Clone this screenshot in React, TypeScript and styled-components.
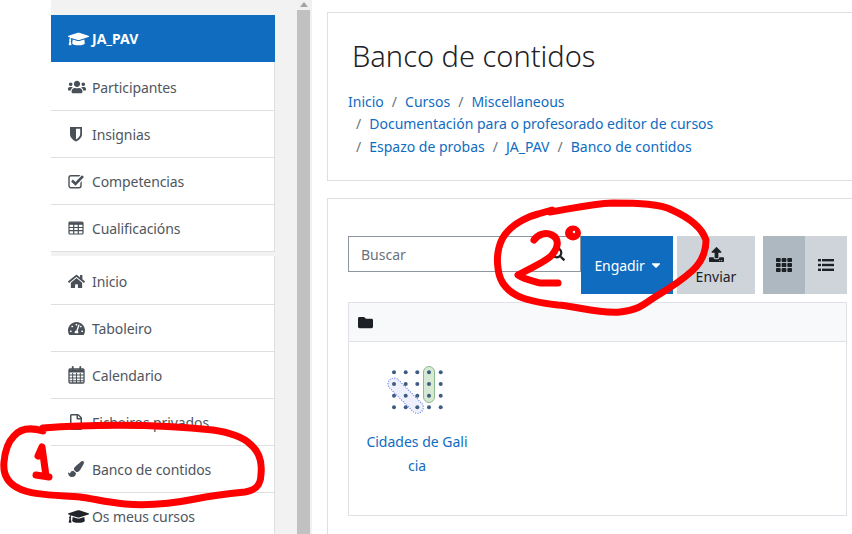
import React from 'react';
import styled, { createGlobalStyle } from 'styled-components';
import {
  FaCaretDown,
  FaFolder,
  FaGraduationCap,
  FaHome,
  FaPaintBrush,
  FaRegFile,
  FaSearch,
  FaTachometerAlt,
  FaTh,
  FaUpload,
  FaUsers,
} from 'react-icons/fa';

const GlobalStyle = createGlobalStyle`
  html, body {
    margin: 0;
    padding: 0;
    background: #fff;
    font-family: "Noto Sans", "Open Sans", sans-serif;
  }
`;

const Page = styled.div`
  position: relative;
  display: flex;
  width: 852px;
  height: 534px;
  overflow: hidden;
  background: #fff;
`;

const Gutter = styled.div`
  flex: 0 0 51px;
`;

const SideColumn = styled.aside`
  flex: 0 0 246px;
  padding-top: 15px;
  background: #f2f2f2;
`;

const SideCard = styled.nav<{ $inset?: boolean }>`
  width: 224px;
  margin-bottom: 3.6px;
  padding-top: ${props => (props.$inset ? '2px' : '0')};
  background: #fff;
  border-right: 1px solid #dfdfdf;
  box-sizing: border-box;
`;

const CourseHeader = styled.div`
  display: flex;
  align-items: center;
  gap: 3px;
  height: 47px;
  padding-left: 17px;
  margin: 0 -1px 2px 0;
  background: #0f6cbf;
  color: #fff;
  font-size: 14px;
  font-weight: 700;
  svg {
    width: 21px;
    height: 20px;
  }
`;

const SideItem = styled.div`
  display: flex;
  align-items: center;
  height: 47.1px;
  box-sizing: border-box;
  padding-left: 17px;
  border-bottom: 1px solid #dfdfdf;
  color: #4f565d;
  font-size: 14px;
  letter-spacing: -0.1px;
`;

const SideIcon = styled.span`
  display: flex;
  align-items: center;
  flex: 0 0 24px;
  color: #495057;
`;

const ScrollTrack = styled.div`
  flex: 0 0 15px;
  display: flex;
  flex-direction: column;
  align-items: center;
  box-sizing: border-box;
  padding-right: 2px;
  background: #f1f1f1;
`;

const ScrollArrow = styled.div`
  width: 0;
  height: 0;
  margin: 2px 0 3px;
  border-left: 4px solid transparent;
  border-right: 4px solid transparent;
  border-bottom: 5px solid #a3a3a3;
`;

const ScrollThumb = styled.div`
  flex: 1;
  width: 13px;
  background: #c1c1c1;
`;

const Main = styled.main`
  flex: 1;
  min-width: 0;
  padding: 12px 0 0 15px;
`;

const Card = styled.section`
  margin-right: -20px;
  border: 1px solid #dfdfdf;
  background: #fff;
`;

const HeaderCard = styled(Card)`
  height: 169px;
  box-sizing: border-box;
  padding: 20px 0 0 20px;
  margin-bottom: 17px;
`;

const Title = styled.h1`
  margin: 0 0 12px 4px;
  color: #1d2125;
  font-size: 29px;
  font-weight: 300;
  line-height: 46px;
`;

const Crumbs = styled.ol`
  display: flex;
  flex-wrap: wrap;
  width: 400px;
  margin: 0;
  padding: 0;
  list-style: none;
  font-size: 14px;
  line-height: 22.4px;
`;

const Crumb = styled.li`
  color: #0f6cbf;
  & + &::before {
    content: '/';
    padding: 0 8px;
    color: #6a737b;
  }
`;

const ContentCard = styled(Card)`
  height: 400px;
  box-sizing: border-box;
  padding: 37px 0 0 20px;
`;

const Toolbar = styled.div`
  display: flex;
  align-items: flex-start;
  height: 66px;
`;

const Search = styled.div`
  display: flex;
  align-items: center;
  justify-content: space-between;
  width: 233px;
  height: 36px;
  box-sizing: border-box;
  padding: 0 15px 0 12px;
  border: 1px solid #8f959e;
  color: #6a737b;
  font-size: 14px;
  svg {
    color: #1d2125;
    font-size: 14px;
  }
`;

const AddButton = styled.div`
  display: flex;
  align-items: center;
  justify-content: center;
  gap: 4px;
  width: 92px;
  height: 58px;
  box-sizing: border-box;
  padding-left: 3px;
  margin-right: 4px;
  background: #0f6cbf;
  color: #fff;
  font-size: 14px;
  letter-spacing: -0.1px;
  svg {
    font-size: 14px;
  }
`;

const UploadButton = styled.div`
  display: flex;
  flex-direction: column;
  align-items: center;
  width: 78px;
  height: 58px;
  box-sizing: border-box;
  padding-top: 11px;
  margin-right: 8px;
  background: #ced4da;
  color: #1d2125;
  font-size: 14px;
  line-height: 20px;
  svg {
    font-size: 15px;
    margin-bottom: 5px;
  }
`;

const ViewToggle = styled.div<{ $active?: boolean }>`
  display: flex;
  align-items: center;
  justify-content: center;
  width: 42px;
  height: 58px;
  background: ${props => (props.$active ? '#aeb8c1' : '#ced4da')};
  color: #1d2125;
  font-size: 16px;
`;

const FilePanel = styled.div`
  width: 499px;
  height: 214px;
  box-sizing: border-box;
  border: 1px solid #dee2e6;
`;

const PathBar = styled.div`
  display: flex;
  align-items: center;
  height: 39px;
  box-sizing: border-box;
  padding-left: 9px;
  background: #f8f9fa;
  border-bottom: 1px solid #dee2e6;
  color: #1d2125;
  font-size: 15px;
`;

const FileTile = styled.div`
  display: flex;
  flex-direction: column;
  align-items: center;
  width: 136px;
  padding-top: 24px;
`;

const FileName = styled.div`
  width: 106px;
  margin-top: 12px;
  color: #0f6cbf;
  font-size: 14px;
  line-height: 24px;
  text-align: center;
  word-break: break-all;
`;

const Scribbles = styled.svg`
  position: absolute;
  top: 0;
  left: 0;
  pointer-events: none;
`;

const ShieldIcon = () => (
  <svg width="16" height="16" viewBox="0 0 16 16">
    <path d="M2 1 H14 V8 C14 12 10.5 14.3 8 15.5 C5.5 14.3 2 12 2 8 Z" fill="currentColor" />
    <path d="M8 2.8 H12.2 V8 C12.2 10.4 9.8 12.4 8 13.4 Z" fill="#fff" />
  </svg>
);

const CheckIcon = () => (
  <svg width="17" height="16" viewBox="0 0 17 16" fill="none" stroke="currentColor">
    <rect x="1" y="2.8" width="12" height="12" rx="2" strokeWidth="1.4" />
    <path d="M4 7.5 L7.5 11 L15 3.2" stroke="#fff" strokeWidth="5" />
    <path d="M4 7.5 L7.5 11 L15 3.2" strokeWidth="2.6" />
  </svg>
);

const TableIcon = () => (
  <svg width="16" height="14" viewBox="0 0 16 14" fill="none" stroke="currentColor" strokeWidth="1.2">
    <rect x="1" y="1" width="14" height="12" rx="1" />
    <path d="M1 2.5 H15" strokeWidth="2.6" />
    <path d="M1 6.5 H15 M1 9.7 H15 M5.7 3 V13 M10.3 3 V13" />
  </svg>
);

const CalendarIcon = () => (
  <svg width="17" height="18" viewBox="0 0 17 18" fill="none" stroke="currentColor" strokeWidth="1">
    <rect x="1" y="3" width="15" height="14" rx="1" strokeWidth="1.3" />
    <path d="M1 5 H16" strokeWidth="3" />
    <path d="M1 9 H16 M1 12 H16 M1 14.8 H16 M4.7 7 V17 M8.5 7 V17 M12.3 7 V17" />
    <path d="M4.7 1 V4.5 M12.3 1 V4.5" strokeWidth="1.8" strokeLinecap="round" />
  </svg>
);

const ListIcon = () => (
  <svg width="16" height="14" viewBox="0 0 16 14" fill="currentColor">
    <rect x="0" y="1" width="3" height="2.4" />
    <rect x="4" y="1" width="12" height="2.4" />
    <rect x="0" y="5.8" width="3" height="2.4" />
    <rect x="4" y="5.8" width="12" height="2.4" />
    <rect x="0" y="10.6" width="3" height="2.4" />
    <rect x="4" y="10.6" width="12" height="2.4" />
  </svg>
);

const courseItems = [
  { icon: <FaUsers size={18} />, label: 'Participantes' },
  { icon: <ShieldIcon />, label: 'Insignias' },
  { icon: <CheckIcon />, label: 'Competencias' },
  { icon: <TableIcon />, label: 'Cualificacións' },
];

const siteItems = [
  { icon: <FaHome size={17} />, label: 'Inicio' },
  { icon: <FaTachometerAlt size={17} />, label: 'Taboleiro' },
  { icon: <CalendarIcon />, label: 'Calendario' },
  { icon: <FaRegFile size={16} />, label: 'Ficheiros privados' },
  { icon: <FaPaintBrush size={16} />, label: 'Banco de contidos' },
  { icon: <FaGraduationCap size={21} color="#212529" />, label: 'Os meus cursos' },
];

const crumbs = [
  'Inicio',
  'Cursos',
  'Miscellaneous',
  'Documentación para o profesorado editor de cursos',
  'Espazo de probas',
  'JA_PAV',
  'Banco de contidos',
];

const dotColumns = [8, 19.7, 31.3, 43, 54.7];
const dotRows = [6.3, 18, 29.7, 41.3];

const ContentIcon = () => (
  <svg width="62" height="52" viewBox="0 0 62 52">
    <rect x="37.5" y="0.5" width="11" height="36" rx="5.5" fill="#d5e9d3" stroke="#8dbb8d" />
    <rect
      x="-6"
      y="-6"
      width="45"
      height="12"
      rx="6"
      transform="translate(8 18) rotate(45)"
      fill="#eef1fb"
      stroke="#4a6cf7"
      strokeDasharray="1 1.4"
    />
    {dotRows.map(y =>
      dotColumns.map(x => <circle key={`${x}-${y}`} cx={x} cy={y} r="2" fill="#3e5c82" />),
    )}
  </svg>
);

const App = () => (
  <Page>
    <GlobalStyle />
    <Gutter />
    <SideColumn>
      <SideCard>
        <CourseHeader>
          <FaGraduationCap />
          JA_PAV
        </CourseHeader>
        {courseItems.map(item => (
          <SideItem key={item.label}>
            <SideIcon>{item.icon}</SideIcon>
            {item.label}
          </SideItem>
        ))}
      </SideCard>
      <SideCard $inset>
        {siteItems.map(item => (
          <SideItem key={item.label}>
            <SideIcon>{item.icon}</SideIcon>
            {item.label}
          </SideItem>
        ))}
      </SideCard>
    </SideColumn>
    <ScrollTrack>
      <ScrollArrow />
      <ScrollThumb />
    </ScrollTrack>
    <Main>
      <HeaderCard>
        <Title>Banco de contidos</Title>
        <Crumbs>
          {crumbs.map(label => (
            <Crumb key={label}>{label}</Crumb>
          ))}
        </Crumbs>
      </HeaderCard>
      <ContentCard>
        <Toolbar>
          <Search>
            Buscar
            <FaSearch />
          </Search>
          <AddButton>
            Engadir
            <FaCaretDown />
          </AddButton>
          <UploadButton>
            <FaUpload />
            Enviar
          </UploadButton>
          <ViewToggle $active>
            <FaTh />
          </ViewToggle>
          <ViewToggle>
            <ListIcon />
          </ViewToggle>
        </Toolbar>
        <FilePanel>
          <PathBar>
            <FaFolder />
          </PathBar>
          <FileTile>
            <ContentIcon />
            <FileName>Cidades de Galicia</FileName>
          </FileTile>
        </FilePanel>
      </ContentCard>
    </Main>
    <Scribbles width="852" height="534" viewBox="0 0 852 534" fill="none" stroke="#fe0000" strokeLinecap="round" strokeLinejoin="round">
      <path
        strokeWidth="7"
        d="M43 428 C80 425 150 423 213 430 C232 433 244 438 250 444 C260 452 262 464 261 474 C261 484 257 490 245 492 C225 494 210 496 195 499 C170 504 150 506 125 504 C105 502 95 499 80 497 C55 495 30 495 18 488 C6 482 3 472 4 462 C5 450 9 441 14 436 C20 429 30 427 43 431"
      />
      <path strokeWidth="7" d="M38 456 L42 447 L46 476 M36 475 L49 477" />
      <path
        strokeWidth="7"
        d="M550 212 C575 208 590 204 613 203 C640 203 660 204 672 210 C690 218 702 228 706 240 C706 252 702 262 692 271 C680 282 665 291 655 297 C645 303 640 310 620 312 C600 314 575 306 558 305 C540 303 525 300 516 295 C505 289 499 280 498 268 C496 255 499 240 508 231 C516 222 530 216 538 214 L552 210"
      />
      <path strokeWidth="7" d="M534 240 C538 234 546 232 552 235 C560 239 558 248 552 255 C546 262 530 268 518 275 C523 279 533 281 540 283 L558 283" />
      <ellipse cx="573" cy="233" rx="6" ry="5.5" fill="#fe0000" strokeWidth="4" />
      <circle cx="574" cy="232" r="1.2" fill="#fff" stroke="none" />
    </Scribbles>
  </Page>
);

export default App;
